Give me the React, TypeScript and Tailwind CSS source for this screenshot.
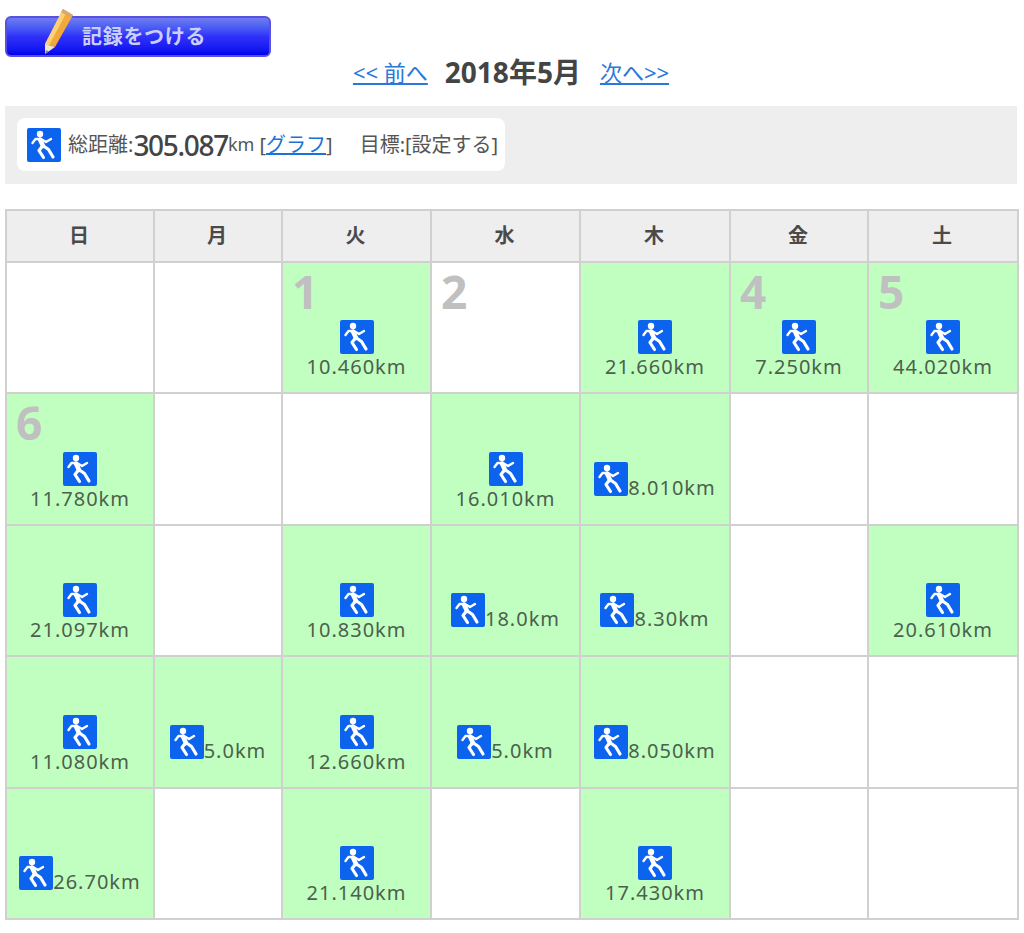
import React from 'react';

type Day = { num?: number; km?: string; inline?: boolean };

const days = ['日', '月', '火', '水', '木', '金', '土'];

const rows: { h: string; cells: Day[] }[] = [
    {
        h: 'h-[131px]',
        cells: [{}, {}, { num: 1, km: '10.460' }, { num: 2 }, { km: '21.660' }, { num: 4, km: '7.250' }, { num: 5, km: '44.020' }],
    },
    {
        h: 'h-[132px]',
        cells: [{ num: 6, km: '11.780' }, {}, {}, { km: '16.010' }, { km: '8.010', inline: true }, {}, {}],
    },
    {
        h: 'h-[131px]',
        cells: [{ km: '21.097' }, {}, { km: '10.830' }, { km: '18.0', inline: true }, { km: '8.30', inline: true }, {}, { km: '20.610' }],
    },
    {
        h: 'h-[132px]',
        cells: [{ km: '11.080' }, { km: '5.0', inline: true }, { km: '12.660' }, { km: '5.0', inline: true }, { km: '8.050', inline: true }, {}, {}],
    },
    {
        h: 'h-[131px]',
        cells: [{ km: '26.70', inline: true }, {}, { km: '21.140' }, {}, { km: '17.430' }, {}, {}],
    },
];

function RunIcon() {
    return (
        <span className="block w-[34px] h-[34px] shrink-0 rounded-[2px] bg-[#0b63ee]">
            <svg width="34" height="34" viewBox="0 0 34 34" fill="none" stroke="#fff" strokeLinecap="round" strokeLinejoin="round">
                <circle cx="13" cy="6" r="3.2" fill="#fff" stroke="none" />
                <path d="M13 11.5 L16 18" strokeWidth="4.5" />
                <path d="M13 11 L8.5 11 L5.5 15" strokeWidth="2.4" />
                <path d="M14 11 L19 14 L24 11" strokeWidth="2.4" />
                <path d="M15.5 18 L12 22.5 L16.5 29.5" strokeWidth="3.2" />
                <path d="M16.5 18 L21.5 21.5 L26 29" strokeWidth="3.2" />
            </svg>
        </span>
    );
}

function Cell({ day, height }: { day: Day; height: string }) {
    return (
        <div className={`relative border-r-2 border-b-2 border-[#d0d0d0] ${height} ${day.km ? 'bg-[#c0ffc0]' : 'bg-white'}`}>
            {day.num && (
                <span className="absolute left-[9px] top-[2px] text-[46px] leading-[52px] font-bold text-[#c0c0c0]">
                    {day.num}
                </span>
            )}
            {day.km && (
                <div className={day.inline
                    ? 'flex items-end justify-center h-full pb-[28px]'
                    : 'flex flex-col items-center justify-end h-full pb-[12px]'}>
                    <RunIcon />
                    <span className={`text-[20px] tracking-[1px] text-[#4d5f4d] ${day.inline ? 'leading-[20px] -mb-[2px]' : 'leading-[26px]'}`}>
                        {day.km}km
                    </span>
                </div>
            )}
        </div>
    );
}

export default function App() {
    return (
        <div className="w-[1024px] h-[933px] bg-white pl-[5px] pt-[16px] overflow-hidden font-['Noto_Sans','Noto_Sans_CJK_JP',sans-serif]">
            <div className="relative flex items-center w-[266px] h-[41px] rounded-[6px] border-2 border-[#5a50e0] bg-gradient-to-b from-[#6f7cf0] via-[#3030f8] to-[#0000ee]">
                <svg className="absolute left-[34px] -top-[11px]" width="40" height="48" viewBox="0 0 40 48">
                    <path d="M22 2 L32 8 L14 40 L4 37 Z" fill="#f2a93a" />
                    <path d="M22 2 L26 4.5 L8 38.5 L4 37 Z" fill="#fbd07a" />
                    <path d="M22 2 L32 8 L30 11 L20 5 Z" fill="#d8a868" />
                    <path d="M4 37 L14 40 L4 47 Z" fill="#f3e6cf" />
                    <path d="M4 47 L5 43 L8 44.5 Z" fill="#8a8a8a" />
                </svg>
                <span className="ml-[75px] text-[20px] font-bold tracking-[0.7px] text-[#c9d0fb]">記録をつける</span>
            </div>

            <div className="flex items-center justify-center w-[1012px] h-[33px] mt-[-1px] pb-[1px] whitespace-nowrap">
                <a className="text-[22px] leading-[26px] text-[#2a78dc] underline">&lt;&lt; 前へ</a>
                <span className="ml-[17px] mr-[19px] text-[28px] leading-[32px] font-bold text-[#444]">2018年5月</span>
                <a className="text-[22px] leading-[26px] text-[#2a78dc] underline">次へ&gt;&gt;</a>
            </div>

            <div className="mt-[17px] w-[1012px] h-[78px] bg-[#eeeeee] pl-[12px] pt-[12px]">
                <div className="flex items-center w-[488px] h-[53px] rounded-[8px] bg-white pl-[10px] text-[#555] text-[20px] whitespace-nowrap">
                    <RunIcon />
                    <span className="ml-[7px]">総距離:</span>
                    <span className="text-[28px] font-medium tracking-[-1.3px] text-[#444]">305.087</span>
                    <span className="text-[18px]">km</span>
                    <span className="ml-[5px]">[<a className="text-[#1a73d8] underline">グラフ</a>]</span>
                    <span className="ml-[27px]">目標:[設定する]</span>
                </div>
            </div>

            <div className="mt-[25px] grid w-[1014px] grid-cols-[148px_128px_149px_149px_150px_138px_150px] border-l-2 border-t-2 border-[#d0d0d0]">
                {days.map(d => (
                    <div key={d} className="flex items-center justify-center h-[52px] pr-[2px] border-r-2 border-b-2 border-[#d0d0d0] bg-[#eeeeee] text-[20px] font-bold text-[#4a4a4a]">{d}</div>
                ))}
                {rows.map((r, i) => r.cells.map((c, j) => <Cell key={`${i}-${j}`} day={c} height={r.h} />))}
            </div>
        </div>
    );
}
